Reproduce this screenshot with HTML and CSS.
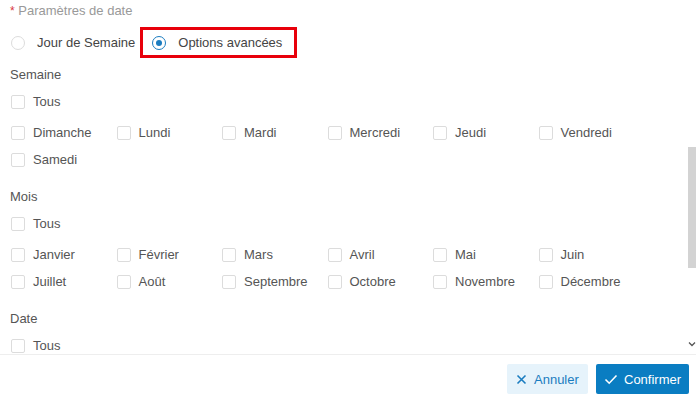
FILE: index.html
```html
<!DOCTYPE html>
<html lang="fr">
<head>
  <meta charset="UTF-8" />
  <title>Paramètres de date</title>
  <link rel="stylesheet" href="styles.css">
</head>
<body>
  <div class="dialog">
    <div class="dialog-body">
      <div class="field-label"><span class="required">*</span> Paramètres de date</div>

      <div class="radio-row">
        <label class="radio">
          <span class="radio-dot"></span>
          <span>Jour de Semaine</span>
        </label>
        <label class="radio checked highlight">
          <span class="radio-dot"></span>
          <span>Options avancées</span>
        </label>
      </div>

      <div class="group">
        <div class="group-title">Semaine</div>
        <label class="check all"><span class="box"></span>Tous</label>
        <div class="check-grid">
          <label class="check"><span class="box"></span>Dimanche</label>
          <label class="check"><span class="box"></span>Lundi</label>
          <label class="check"><span class="box"></span>Mardi</label>
          <label class="check"><span class="box"></span>Mercredi</label>
          <label class="check"><span class="box"></span>Jeudi</label>
          <label class="check"><span class="box"></span>Vendredi</label>
          <label class="check"><span class="box"></span>Samedi</label>
        </div>
      </div>

      <div class="group">
        <div class="group-title">Mois</div>
        <label class="check all"><span class="box"></span>Tous</label>
        <div class="check-grid">
          <label class="check"><span class="box"></span>Janvier</label>
          <label class="check"><span class="box"></span>Février</label>
          <label class="check"><span class="box"></span>Mars</label>
          <label class="check"><span class="box"></span>Avril</label>
          <label class="check"><span class="box"></span>Mai</label>
          <label class="check"><span class="box"></span>Juin</label>
          <label class="check"><span class="box"></span>Juillet</label>
          <label class="check"><span class="box"></span>Août</label>
          <label class="check"><span class="box"></span>Septembre</label>
          <label class="check"><span class="box"></span>Octobre</label>
          <label class="check"><span class="box"></span>Novembre</label>
          <label class="check"><span class="box"></span>Décembre</label>
        </div>
      </div>

      <div class="group">
        <div class="group-title">Date</div>
        <label class="check all"><span class="box"></span>Tous</label>
      </div>

      <div class="scroll-thumb"></div>
      <svg class="scroll-arrow" width="8" height="6" viewBox="0 0 8 6">
        <path d="M1 1.5 L4 4.5 L7 1.5" fill="none" stroke="#555" stroke-width="1.3" />
      </svg>
    </div>

    <div class="dialog-footer">
      <button class="btn btn-cancel">
        <svg width="11" height="11" viewBox="0 0 11 11">
          <path d="M1.5 1.5 L9.5 9.5 M9.5 1.5 L1.5 9.5" stroke="#1a7cc0" stroke-width="1.6" />
        </svg>
        Annuler
      </button>
      <button class="btn btn-confirm">
        <svg width="14" height="11" viewBox="0 0 14 11">
          <path d="M1.5 5.5 L5.2 9.2 L12.5 1.5" fill="none" stroke="#fff" stroke-width="1.6" />
        </svg>
        Confirmer
      </button>
    </div>
  </div>
</body>
</html>
```

FILE: styles.css
```css
* {
  box-sizing: border-box;
  margin: 0;
  padding: 0;
}

body {
  background-color: #fff;
  font-family: 'Liberation Sans', Arial, sans-serif;
  font-size: 13px;
  color: #555;
}

.dialog {
  width: 696px;
  height: 402px;
  display: flex;
  flex-direction: column;
}

.dialog-body {
  position: relative;
  height: 354px;
  overflow: hidden;
  padding-left: 11px;
}

.field-label {
  line-height: 20px;
  padding-top: 1px;
  color: #999;
  margin-left: -1px;
}

.required {
  color: #d9363e;
  font-size: 12px;
}

/* radio options */
.radio-row {
  display: flex;
  align-items: center;
  height: 31px;
  margin-top: 6px;
}

.radio {
  display: flex;
  align-items: center;
  gap: 12px;
  height: 31px;
  color: #444;
}

.radio-dot {
  width: 14px;
  height: 14px;
  border: 1px solid #dcdcdc;
  border-radius: 50%;
  position: relative;
}

.radio.checked .radio-dot {
  border-color: #1a7cc0;
}

.radio.checked .radio-dot::after {
  content: '';
  position: absolute;
  top: 3px;
  left: 3px;
  width: 6px;
  height: 6px;
  border-radius: 50%;
  background-color: #1a7cc0;
}

.radio.highlight {
  border: 3px solid #e8000b;
  margin-left: 5px;
  padding: 0 9px 0 9px;
  width: 157px;
}

/* checkbox groups */
.group {
  margin-top: 3px;
  margin-bottom: 10px;
}

.group-title {
  line-height: 27px;
  margin-left: -1px;
}

.check {
  display: flex;
  align-items: center;
  gap: 8px;
  height: 27px;
  color: #555;
}

.box {
  width: 14px;
  height: 14px;
  border: 1px solid #dcdcdc;
  border-radius: 2px;
  flex-shrink: 0;
}

.check.all {
  margin-bottom: 4px;
}

.check-grid {
  display: grid;
  grid-template-columns: repeat(6, 105.5px);
}

/* scrollbar drawn over the content */
.scroll-thumb {
  position: absolute;
  top: 147px;
  right: 0;
  width: 8px;
  height: 121px;
  background-color: #d3d3d3;
}

.scroll-arrow {
  position: absolute;
  top: 341px;
  right: 0;
}

/* footer */
.dialog-footer {
  border-top: 1px solid #eee;
  display: flex;
  justify-content: flex-end;
  gap: 8px;
  padding: 9px 7px 0 0;
}

.btn {
  height: 30px;
  border: none;
  border-radius: 2px;
  font-family: 'Liberation Sans', Arial, sans-serif;
  font-size: 13px;
  display: flex;
  align-items: center;
  gap: 6px;
  cursor: pointer;
}

.btn-cancel {
  width: 81px;
  padding-left: 9px;
  background-color: #e6f3fb;
  color: #1a7cc0;
}

.btn-cancel svg {
  margin-right: 1px;
}

.btn-confirm {
  width: 93px;
  padding-left: 8px;
  background-color: #0a7dc2;
  color: #fff;
}
```
